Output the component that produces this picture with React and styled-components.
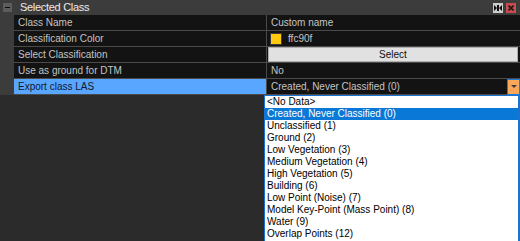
import React from "react";
import styled, { createGlobalStyle } from "styled-components";

const GlobalStyle = createGlobalStyle`
  html, body {
    margin: 0;
    padding: 0;
    background: #2b2b2b;
  }
  body {
    font-family: "Liberation Sans", Arial, sans-serif;
  }
`;

const Panel = styled.div`
  position: relative;
  width: 520px;
  height: 241px;
  overflow: hidden;
  background: #2b2b2b;
`;

const Header = styled.div`
  height: 15px;
  display: flex;
  align-items: center;
  background: #3c3c3c;
  padding: 0 4px 0 3px;
  box-sizing: border-box;
`;

const Collapse = styled.span`
  width: 9px;
  height: 9px;
  background: #5c5c5c;
  display: flex;
  align-items: center;
  justify-content: center;
  &::after {
    content: "";
    width: 5px;
    height: 1px;
    background: #0a0a0a;
  }
`;

const Title = styled.span`
  margin-left: 8px;
  font-size: 11px;
  letter-spacing: -0.3px;
  color: #ececec;
  flex: 1;
  line-height: 15px;
`;

const HeadButton = styled.span`
  width: 10px;
  height: 10px;
  margin-left: ${({ $gap }) => $gap || 0}px;
  background: ${({ $danger }) => ($danger ? "#c94b4b" : "#cdcdcd")};
  display: flex;
  align-items: center;
  justify-content: center;
`;

const Body = styled.div`
  display: flex;
`;

const Gutter = styled.div`
  width: 14px;
  background: #3c3c3c;
`;

const Grid = styled.div`
  flex: 1;
  display: grid;
  grid-template-columns: 252px 1px 1fr;
  background: #4a4a4a;
`;

const Cell = styled.div`
  height: 15px;
  margin-bottom: 1px;
  display: flex;
  align-items: center;
  box-sizing: border-box;
  padding: 0 ${({ $pad }) => ($pad === undefined ? 4 : $pad)}px;
  font-size: 10px;
  color: ${({ $active }) => ($active ? "#14182a" : "#c4c4c4")};
  background: ${({ $active }) => ($active ? "#58a6ff" : "#131313")};
  white-space: nowrap;
`;

const Divider = styled.div`
  background: #4a4a4a;
`;

const Swatch = styled.span`
  width: 10px;
  height: 10px;
  border: 1px solid #3a3a3a;
  background: ${({ $color }) => $color};
  margin: 0 6px 0 -1px;
`;

const SelectButton = styled.button`
  flex: 1;
  height: 15px;
  margin: 0 2px 0 1px;
  padding: 0;
  border: 1px solid #adadad;
  background: #e1e1e1;
  color: #101010;
  font-family: "Liberation Sans", Arial, sans-serif;
  font-size: 10px;
  line-height: 13px;
`;

const ComboText = styled.span`
  flex: 1;
`;

const ComboArrow = styled.span`
  width: 11px;
  height: 14px;
  margin-right: 0;
  border: 1px solid #1d7ad8;
  background: #fba75a;
  display: flex;
  align-items: center;
  justify-content: center;
  &::after {
    content: "";
    border-left: 3px solid transparent;
    border-right: 3px solid transparent;
    border-top: 3px solid #3a3a3a;
  }
`;

const DropList = styled.ul`
  position: absolute;
  left: 264px;
  top: 95px;
  width: 256px;
  height: 147px;
  margin: 0;
  padding: 0;
  list-style: none;
  box-sizing: border-box;
  background: #ffffff;
  border: 1px solid #1a72d2;
  border-right-width: 2px;
`;

const Option = styled.li`
  height: 12px;
  line-height: 12px;
  padding-left: 2px;
  font-size: 10px;
  color: ${({ $selected }) => ($selected ? "#ffffff" : "#000000")};
  background: ${({ $selected }) => ($selected ? "#0a78d7" : "transparent")};
  white-space: nowrap;
`;

const rows = [
  { label: "Class Name", value: "Custom name" },
  { label: "Classification Color", value: "ffc90f", color: "#ffc90f" },
  { label: "Select Classification", button: "Select" },
  { label: "Use as ground for DTM", value: "No" },
  { label: "Export class LAS", value: "Created, Never Classified (0)", combo: true, active: true },
];

const options = [
  "<No Data>",
  "Created, Never Classified (0)",
  "Unclassified (1)",
  "Ground (2)",
  "Low Vegetation (3)",
  "Medium Vegetation (4)",
  "High Vegetation (5)",
  "Building (6)",
  "Low Point (Noise) (7)",
  "Model Key-Point (Mass Point) (8)",
  "Water (9)",
  "Overlap Points (12)",
];

const PinIcon = () => (
  <svg width="8" height="6" viewBox="0 0 8 6">
    <path d="M0 0 L3 3 L0 6 Z M8 0 L5 3 L8 6 Z" fill="#111" />
    <rect x="3" y="0" width="1" height="6" fill="#111" />
    <rect x="4" y="0" width="1" height="6" fill="#111" />
  </svg>
);

const CloseIcon = () => (
  <svg width="6" height="6" viewBox="0 0 6 6">
    <path d="M0.5 0.5 L5.5 5.5 M5.5 0.5 L0.5 5.5" stroke="#1a1a1a" strokeWidth="1.6" />
  </svg>
);

export default function App() {
  return (
    <>
      <GlobalStyle />
      <Panel>
        <Header>
          <Collapse />
          <Title>Selected Class</Title>
          <HeadButton>
            <PinIcon />
          </HeadButton>
          <HeadButton $danger $gap={3}>
            <CloseIcon />
          </HeadButton>
        </Header>
        <Body>
          <Gutter />
          <Grid>
            {rows.map((row) => (
              <React.Fragment key={row.label}>
                <Cell $active={row.active}>{row.label}</Cell>
                <Divider />
                {row.button ? (
                  <Cell $pad={0}>
                    <SelectButton>{row.button}</SelectButton>
                  </Cell>
                ) : (
                  <Cell $pad={row.combo ? 0 : 4}>
                    {row.color && <Swatch $color={row.color} />}
                    {row.combo ? (
                      <>
                        <ComboText style={{ paddingLeft: 4 }}>{row.value}</ComboText>
                        <ComboArrow />
                      </>
                    ) : (
                      row.value
                    )}
                  </Cell>
                )}
              </React.Fragment>
            ))}
          </Grid>
        </Body>
        <DropList>
          {options.map((opt, i) => (
            <Option key={opt} $selected={i === 1}>
              {opt}
            </Option>
          ))}
        </DropList>
      </Panel>
    </>
  );
}
